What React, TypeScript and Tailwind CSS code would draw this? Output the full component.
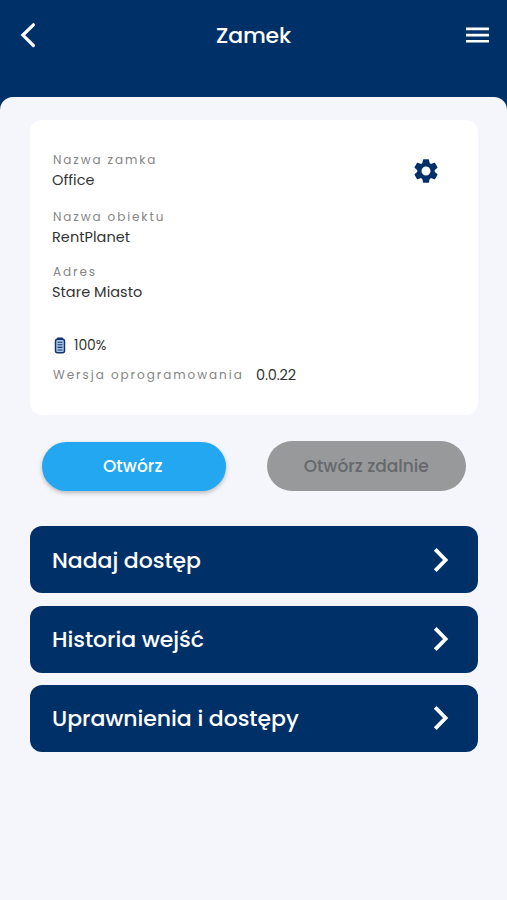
import React from 'react';

interface IconProps {
  className?: string;
}

const BackIcon: React.FC<IconProps> = ({ className }) => (
  <svg className={className} viewBox="0 0 16 26" fill="none" stroke="currentColor" strokeWidth="3.2" strokeLinecap="round">
    <path d="M13.4 2.8 2.9 13.1l10.5 10.4" />
  </svg>
);

const MenuIcon: React.FC<IconProps> = ({ className }) => (
  <svg className={className} viewBox="0 0 23 16" fill="currentColor">
    <path d="M0 .6h23v2.6H0zM0 6.8h23v2.6H0zM0 13h23v2.6H0z" />
  </svg>
);

const ChevronIcon: React.FC<IconProps> = ({ className }) => (
  <svg className={className} viewBox="0 0 16 26" fill="none" stroke="currentColor" strokeWidth="3.8">
    <path d="M2.2 2.4 12.6 13 2.2 23.6" />
  </svg>
);

const BatteryIcon: React.FC<IconProps> = ({ className }) => (
  <svg className={className} viewBox="0 0 12 17" fill="none">
    <path d="M3.5 0.4h5l1.4 2h-7.8z" fill="#12356f" />
    <rect x="1.5" y="2.2" width="9" height="13.6" rx="2" fill="#a9c6e2" stroke="#12356f" strokeWidth="1.5" />
    <path d="M3.6 5.2h4.8M3.6 7.8h4.8M3.6 10.4h4.8M3.6 13h4.8" stroke="#12356f" strokeWidth="1.1" />
  </svg>
);

const GearIcon: React.FC<IconProps> = ({ className }) => (
  <svg className={className} viewBox="-12 -12 24 24" fill="currentColor">
    <circle r="6.6" fill="none" stroke="currentColor" strokeWidth="4.2" />
    {[0, 60, 120, 180, 240, 300].map((angle) => (
      <path
        key={angle}
        transform={`rotate(${angle})`}
        d="M-2.3-11.8h4.6a.7.7 0 0 1 .7.6l.8 4.2h-7.6l.8-4.2a.7.7 0 0 1 .7-.6z"
      />
    ))}
  </svg>
);

interface FieldProps {
  label: string;
  value: string;
}

const Field: React.FC<FieldProps> = ({ label, value }) => (
  <div>
    <div className="h-5 pl-px text-[12px] leading-5 tracking-[1.9px] text-[#858585] whitespace-nowrap">{label}</div>
    <div className="h-5 text-[14.5px] leading-5 tracking-[0.04px] text-[#333333] whitespace-nowrap">{value}</div>
  </div>
);

const links = ['Nadaj dostęp', 'Historia wejść', 'Uprawnienia i dostępy'];

const App: React.FC = () => {
  return (
    <div className="min-h-screen bg-[#003068] font-['Poppins','Inter',sans-serif]">
      <header className="h-[97px] pt-[22px] pl-5 pr-[18px]">
        <div className="h-[26px] flex items-center justify-between text-white">
          <button aria-label="Wstecz">
            <BackIcon className="w-4 h-[26px]" />
          </button>
          <h1 className="pt-0.5 pl-[5px] text-[22px] leading-[26px] font-medium tracking-[-0.2px]">Zamek</h1>
          <button aria-label="Menu">
            <MenuIcon className="w-[23px] h-4" />
          </button>
        </div>
      </header>

      <main className="min-h-[803px] rounded-t-[13px] bg-[#f5f6fb] pt-[23px] pl-[30px] pr-[29.5px]">
        <section className="h-[295px] rounded-xl bg-white pt-[30px] pl-[22px] pr-[39.5px]">
          <div className="flex items-start justify-between">
            <div className="flex flex-col">
              <Field label="Nazwa zamka" value="Office" />
              <div className="mt-[17px]">
                <Field label="Nazwa obiektu" value="RentPlanet" />
              </div>
              <div className="mt-[15px]">
                <Field label="Adres" value="Stare Miasto" />
              </div>
            </div>
            <button aria-label="Ustawienia" className="mt-[8.5px] text-[#003068]">
              <GearIcon className="w-6 h-6" />
            </button>
          </div>

          <div className="mt-[33px] h-5 flex items-center pl-[2px]">
            <BatteryIcon className="w-3 h-[17px]" />
            <span className="ml-2 text-[14px] leading-5 tracking-[-0.1px] text-[#333333]">100%</span>
          </div>
          <div className="mt-[10px] h-5 flex items-center whitespace-nowrap">
            <span className="w-[204px] pl-px text-[12px] leading-5 tracking-[1.96px] text-[#858585]">Wersja oprogramowania</span>
            <span className="text-[14.5px] leading-5 tracking-[-0.2px] text-[#333333]">0.0.22</span>
          </div>
        </section>

        <div className="mt-[26px] h-[50px] flex items-center justify-between pl-3 pr-[11.5px]">
          <button className="w-[183.5px] h-[49px] pt-0.5 pr-0.5 rounded-full bg-[#22a7f0] text-white text-[17px] font-medium tracking-[0.1px] shadow-[0_2px_4px_rgba(0,0,0,0.25)]">
            Otwórz
          </button>
          <button disabled className="w-[199.5px] h-[50px] pt-0.5 rounded-full bg-[#98999b] text-[#66686b] text-[17px] font-medium">
            Otwórz zdalnie
          </button>
        </div>

        <nav className="mt-[35.3px] flex flex-col gap-[12.3px]">
          {links.map((label) => (
            <a
              key={label}
              className="h-[67px] flex items-center justify-between rounded-xl bg-[#003068] pl-[22px] pr-[28.5px] text-white"
            >
              <span className="pt-[2px] text-[22px] leading-7 font-medium tracking-[-0.05px] whitespace-nowrap">{label}</span>
              <ChevronIcon className="w-4 h-[26px]" />
            </a>
          ))}
        </nav>
      </main>
    </div>
  );
};

export default App;
